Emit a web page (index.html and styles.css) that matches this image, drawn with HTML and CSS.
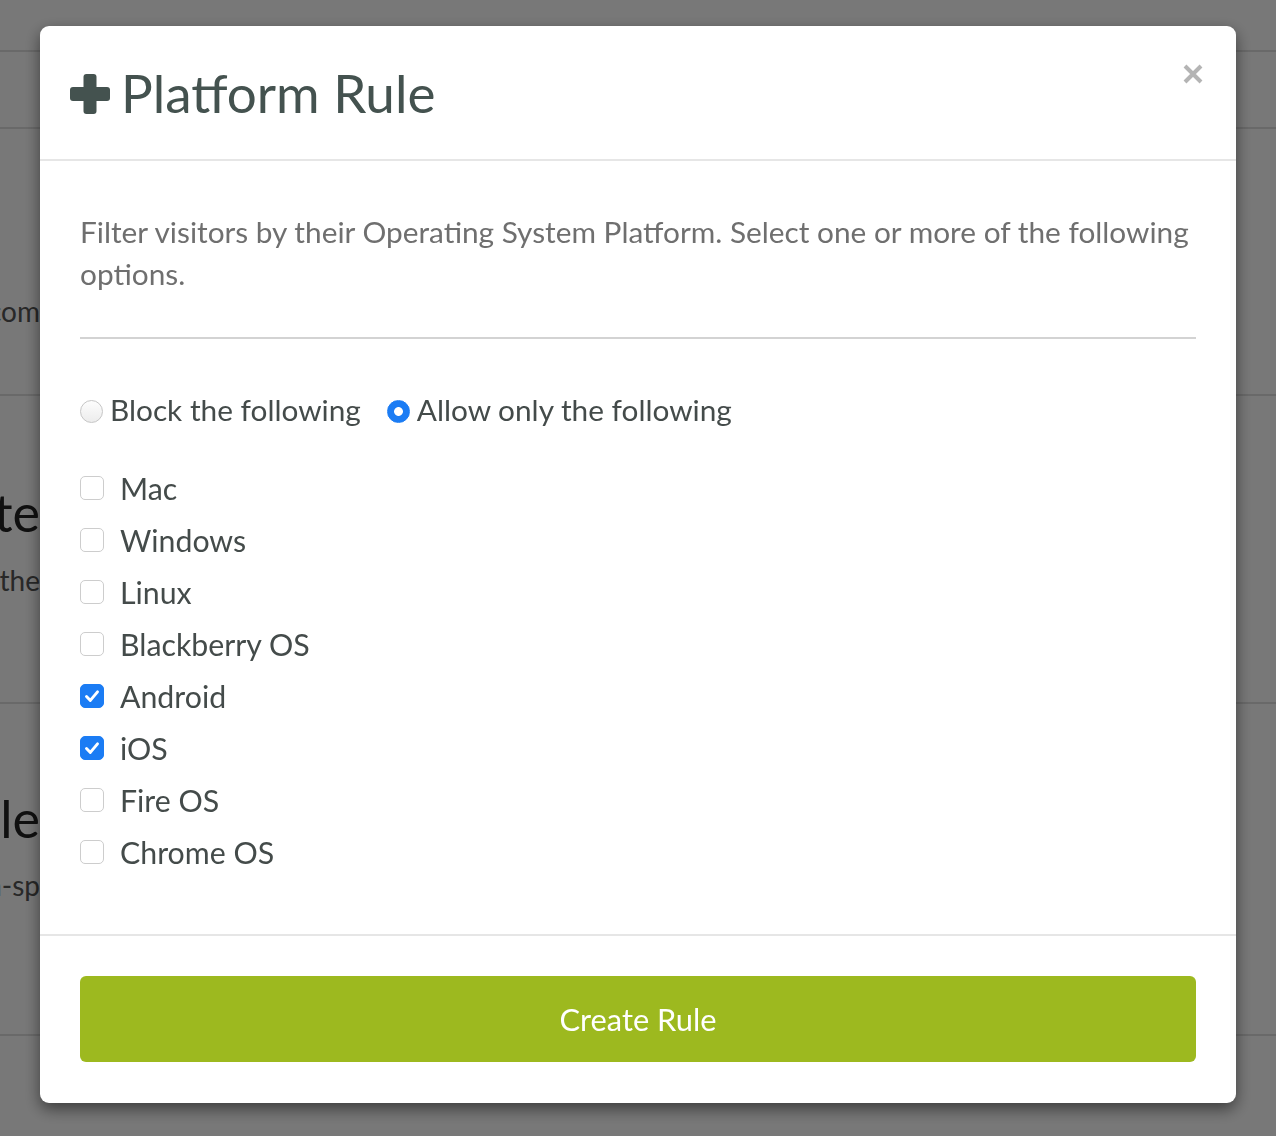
FILE: index.html
```html
<!DOCTYPE html>
<html lang="en">
<head>
<meta charset="utf-8">
<title>Platform Rule</title>
<link rel="stylesheet" href="styles.css">
</head>
<body>
<div class="page">
  <div class="bg-row r1"></div>
  <div class="bg-row r2"></div>
  <div class="bg-row r3"><div class="clip"><span class="small">Shopify.com</span></div></div>
  <div class="bg-row r4">
    <div class="clip big-clip"><span class="big">Redirect Site</span></div>
    <div class="clip sub-clip"><span class="small">Send visitors to the</span></div>
  </div>
  <div class="bg-row r5">
    <div class="clip big-clip"><span class="big">Platform Rule</span></div>
    <div class="clip sub-clip"><span class="small">platform-sp</span></div>
  </div>
  <div class="bg-row r6"></div>
</div>
<div class="backdrop"></div>

<div class="modal">
  <div class="modal-header">
    <h2 class="modal-title">
      <svg class="plus" viewBox="0 0 40 40" width="40" height="40" aria-hidden="true">
        <rect x="13.5" y="0" width="13" height="40" rx="3" fill="#44524f"/>
        <rect x="0" y="13" width="40" height="14" rx="3" fill="#44524f"/>
      </svg>
      <span>Platform Rule</span>
    </h2>
    <button class="close" aria-label="Close">
      <svg viewBox="0 0 20 20" width="20" height="20" aria-hidden="true">
        <path d="M2 2 L18 18 M18 2 L2 18" stroke="#b4b4b4" stroke-width="4" stroke-linecap="butt"/>
      </svg>
    </button>
  </div>

  <div class="modal-body">
    <p class="desc">Filter visitors by their Operating System Platform. Select one or more of the following options.</p>
    <hr class="divider">
    <div class="radios">
      <label class="radio"><input type="radio" name="mode"><span>Block the following</span></label>
      <label class="radio"><input type="radio" name="mode" checked><span>Allow only the following</span></label>
    </div>
    <div class="checks">
      <label class="check"><input type="checkbox"><span>Mac</span></label>
      <label class="check"><input type="checkbox"><span>Windows</span></label>
      <label class="check"><input type="checkbox"><span>Linux</span></label>
      <label class="check"><input type="checkbox"><span>Blackberry OS</span></label>
      <label class="check"><input type="checkbox" checked><span>Android</span></label>
      <label class="check"><input type="checkbox" checked><span>iOS</span></label>
      <label class="check"><input type="checkbox"><span>Fire OS</span></label>
      <label class="check"><input type="checkbox"><span>Chrome OS</span></label>
    </div>
  </div>

  <div class="modal-footer">
    <button class="create">Create Rule</button>
  </div>
</div>
</body>
</html>
```

FILE: styles.css
```css
* { box-sizing: border-box; }

html, body {
  margin: 0;
  padding: 0;
  height: 100%;
}

body {
  font-family: Lato, "Open Sans", "Liberation Sans", sans-serif;
  background: #fff;
  overflow: hidden;
}

/* page behind the modal */
.page {
  display: flex;
  flex-direction: column;
  height: 1136px;
}
.bg-row {
  border-bottom: 2px solid #e0e0e0;
  position: relative;
  overflow: hidden;
}
.r1 { height: 52px; }
.r2 { height: 77px; }
.r3 { height: 267px; padding-top: 164px; }
.r4 { height: 308px; padding-top: 86px; }
.r5 { height: 332px; padding-top: 84px; }
.r6 { flex: 1; border-bottom: none; }

.clip {
  width: 40px;
  overflow: hidden;
  display: flex;
  justify-content: flex-end;
  white-space: nowrap;
  color: #333;
}
.small { font-size: 28px; color: #555; line-height: 36px; }
.big { font-size: 52px; color: #222; line-height: 60px; }
.r4 .sub-clip { margin-top: 20px; }
.r5 .sub-clip { margin-top: 19px; }

.backdrop {
  position: fixed;
  inset: 0;
  background: rgba(0, 0, 0, 0.53);
}

/* modal */
.modal {
  position: fixed;
  left: 40px;
  top: 26px;
  width: 1196px;
  height: 1077px;
  background: #fff;
  border-radius: 9px;
  box-shadow: 0 6px 16px rgba(0, 0, 0, 0.5);
  display: flex;
  flex-direction: column;
}

.modal-header {
  height: 135px;
  border-bottom: 2px solid #e6e6e6;
  display: flex;
  align-items: flex-start;
  justify-content: space-between;
  padding: 0 32px 0 30px;
}

.modal-title {
  margin: 0;
  margin-top: 37px;
  display: flex;
  align-items: center;
  gap: 11px;
  font-size: 53px;
  font-weight: 400;
  color: #44524f;
  line-height: 60px;
}
.plus { display: block; flex: none; margin-top: 1px; }

.close {
  margin-top: 38px;
  margin-right: 1px;
  border: none;
  background: none;
  padding: 0;
  cursor: pointer;
  line-height: 0;
}

.modal-body {
  flex: 1;
  padding: 50px 40px 0 40px;
}

.desc {
  margin: 0;
  font-size: 29.8px;
  line-height: 42px;
  color: #6f6f6f;
}

.divider {
  border: none;
  border-top: 2px solid #d3d3d3;
  margin: 42px 0 0 0;
}

.radios {
  display: flex;
  align-items: center;
  gap: 26px;
  margin-top: 52px;
  height: 36px;
}
.radio, .check {
  display: flex;
  align-items: center;
  color: #444b4a;
  cursor: pointer;
}
.radio { gap: 7px; font-size: 29.8px; }

.radio input {
  appearance: none;
  -webkit-appearance: none;
  margin: 0;
  width: 23px;
  height: 23px;
  border-radius: 50%;
  border: 1px solid #c6c6c6;
  background: linear-gradient(#fdfdfd, #ececec);
  flex: none;
  position: relative;
  top: 2px;
}
.radio input:checked {
  border-color: #1b7cf4;
  background: radial-gradient(circle, #fff 0 4px, #1b7cf4 4.8px);
}

.checks {
  margin-top: 35px;
  display: flex;
  flex-direction: column;
}
.check {
  height: 52px;
  gap: 16px;
  font-size: 30.3px;
}
.check input {
  appearance: none;
  -webkit-appearance: none;
  margin: 0;
  width: 24px;
  height: 24px;
  border-radius: 5px;
  border: 1px solid #cdcdcd;
  background: #fff;
  flex: none;
  position: relative;
}
.check input:checked {
  border-color: #1b7cf4;
  background-color: #1b7cf4;
  background-image: url("data:image/svg+xml,%3Csvg xmlns='http://www.w3.org/2000/svg' viewBox='0 0 24 24'%3E%3Cpath d='M6 12.5 L10.2 16.8 L18 7.5' fill='none' stroke='white' stroke-width='3.2' stroke-linecap='round' stroke-linejoin='round'/%3E%3C/svg%3E");
  background-size: 100% 100%;
}

.modal-footer {
  border-top: 2px solid #e6e6e6;
  padding: 40px 40px 41px;
}
.create {
  display: block;
  width: 100%;
  height: 86px;
  border: none;
  border-radius: 6px;
  background: #9db91f;
  color: #fff;
  font-family: Lato, "Open Sans", "Liberation Sans", sans-serif;
  font-size: 30.8px;
  cursor: pointer;
}
```
